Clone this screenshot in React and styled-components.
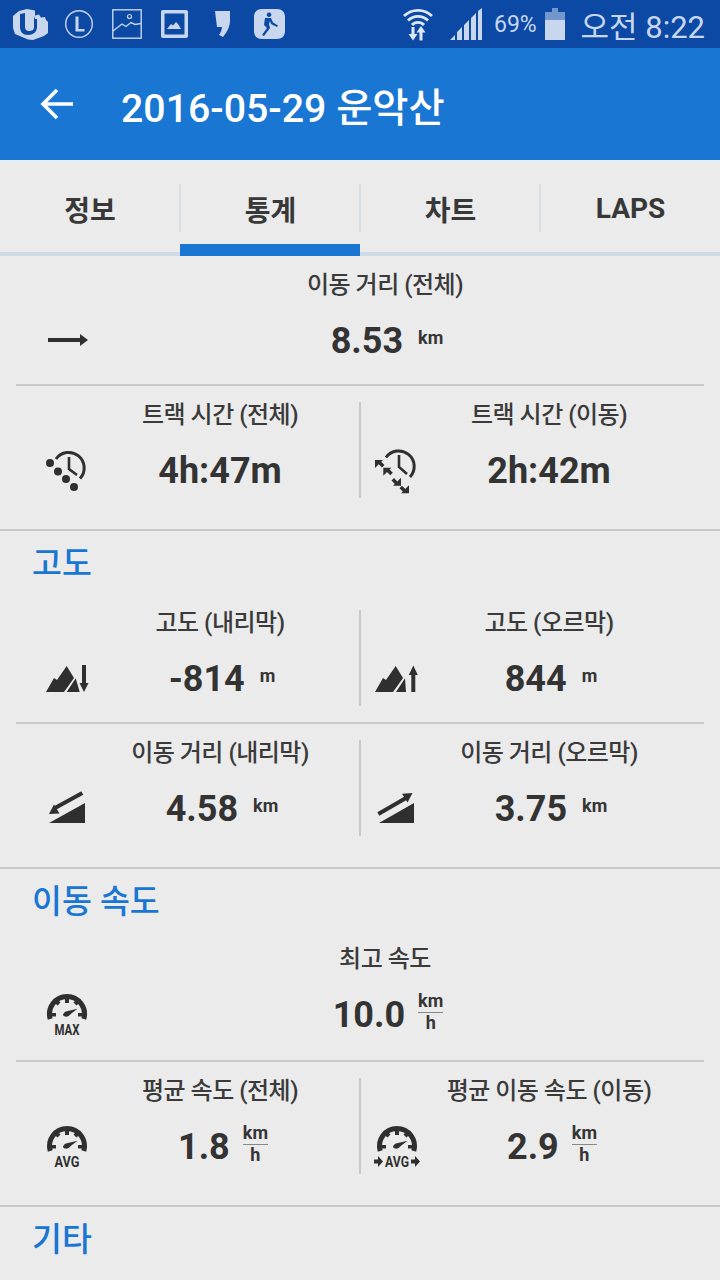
import React from 'react';
import styled, { createGlobalStyle } from 'styled-components';

const Global = createGlobalStyle`
  html, body { margin: 0; padding: 0; background: #ebebeb; }
  body { font-family: Roboto, "Noto Sans CJK KR", sans-serif; }
`;

const Screen = styled.div`
  width: 720px;
  height: 1280px;
  overflow: hidden;
  background: #ebebeb;
  color: #353535;
`;

// STATUS BAR
const StatusBar = styled.div`
  height: 48px;
  background: #0c49a5;
  color: #c8d6ee;
  display: flex;
  align-items: center;
  padding: 0 15px 0 13px;
`;
const StatusIcon = styled.svg`
  flex: none;
  display: block;
  margin-left: ${({ $left }) => $left || 0}px;
  fill: currentColor;
`;
const Battery = styled.span`
  font-size: 23px;
  margin-left: 12px;
  width: 43px;
`;
const Clock = styled.span`
  margin-left: auto;
  font-size: 31px;
  white-space: nowrap;
`;

// APP BAR
const AppBar = styled.div`
  height: 112px;
  background: #1976d2;
  color: #fff;
  display: flex;
  align-items: center;
  padding-left: 40px;
  gap: 47px;
`;
const Title = styled.h1`
  margin: 0;
  font-size: 39.3px;
  font-weight: 500;
  white-space: nowrap;
`;

// TABS
const TabBar = styled.div`
  height: 96px;
  box-sizing: border-box;
  border-top: 2px solid #e2eef8;
  border-bottom: 4px solid #cfdce6;
  display: grid;
  grid-template-columns: repeat(4, 1fr);
  padding-top: 22px;
`;
const Tab = styled.div`
  position: relative;
  height: 48px;
  box-sizing: border-box;
  padding-top: 1px;
  margin-left: ${({ $first }) => ($first ? 0 : -1)}px;
  display: flex;
  align-items: center;
  justify-content: center;
  font-size: 28px;
  font-weight: 700;
  color: #383838;
  border-left: ${({ $first }) => ($first ? 'none' : '2px solid #d6dee6')};

  &::after {
    content: '';
    display: ${({ $active }) => ($active ? 'block' : 'none')};
    position: absolute;
    left: -1px;
    right: 0;
    top: 60px;
    height: 12px;
    background: #1976d2;
  }
`;

// STATS
const Section = styled.section`
  padding-bottom: ${({ $last }) => ($last ? 0 : 15)}px;
  border-bottom: ${({ $last }) => ($last ? 'none' : '2px solid #c8c8c8')};
`;
const Heading = styled.h2`
  margin: 0;
  height: 63px;
  box-sizing: border-box;
  padding: 0 0 5px 32px;
  display: flex;
  align-items: center;
  font-size: 32.5px;
  font-weight: 500;
  color: #1976d2;
`;
const Row = styled.div`
  margin: 0 16px;
  padding: 16px 0;
  display: flex;
  & + & { border-top: 2px solid #c8c8c8; }
`;
const Cell = styled.div`
  flex: ${({ $full }) => ($full ? '1' : '0 0 auto')};
  width: ${({ $full, $width }) => ($full ? 'auto' : `${$width}px`)};
  height: 96px;
  box-sizing: border-box;
  display: flex;
  align-items: flex-start;
  padding: 0 ${({ $padRight }) => $padRight}px 0 ${({ $padLeft }) => $padLeft}px;
  & + & { border-left: 2px solid #c8c8c8; }
`;
const IconSlot = styled.div`
  flex: none;
  width: 44px;
  height: 44px;
  margin-top: ${({ $top }) => 46 + ($top || 0)}px;
  color: #2f2f2f;
`;
const CellBody = styled.div`
  flex: 1;
  min-width: 0;
  margin-top: ${({ $shift }) => 1 + ($shift || 0)}px;
  display: flex;
  flex-direction: column;
  align-items: center;
`;
const Label = styled.div`
  height: 24px;
  line-height: 24px;
  font-size: 24px;
  font-weight: 500;
  letter-spacing: -0.5px;
  white-space: nowrap;
  color: #3a3a3a;
`;
const ValueRow = styled.div`
  margin-top: 20px;
  height: 48px;
  padding-left: ${({ $offset }) => $offset}px;
  display: flex;
  align-items: center;
  gap: ${({ $gap }) => $gap}px;
`;
const Value = styled.span`
  font-size: 36px;
  font-weight: 700;
  color: #333;
  white-space: nowrap;
`;
const Unit = styled.span`
  font-size: 18px;
  font-weight: 700;
  margin-bottom: 7px;
`;
const Fraction = styled.span`
  display: inline-flex;
  flex-direction: column;
  align-items: center;
  font-size: 18px;
  font-weight: 700;
  line-height: 20px;
  margin-bottom: 7px;
  & > span:first-child {
    border-bottom: 1.5px solid #888;
    padding: 0 0 1px;
  }
`;
const GaugeText = styled.text`
  font-family: Roboto, sans-serif;
  font-weight: 700;
  font-size: 15px;
  fill: currentColor;
  text-anchor: middle;
`;

// ICONS
const Svg = ({ children }) => (
  <svg width="44" height="44" viewBox="0 0 44 44" fill="currentColor" style={{ display: 'block', overflow: 'visible' }}>
    {children}
  </svg>
);

const LongArrow = () => (
  <Svg>
    <rect x="3" y="20" width="33" height="4" />
    <path d="M35 16l8 6-8 6z" />
  </Svg>
);

const DotsClock = () => (
  <Svg>
    <path d="M11 11A15.500 15.500 0 1 1 35 30.500" fill="none" stroke="currentColor" strokeWidth="3" />
    <path d="M24 9v12l8 6" fill="none" stroke="currentColor" strokeWidth="2.600" />
    <circle cx="5" cy="15" r="4" />
    <circle cx="13" cy="23.500" r="4" />
    <circle cx="21" cy="31" r="4" />
    <circle cx="29" cy="39" r="4" />
  </Svg>
);

const TinyArrow = ({ x, y, flip }) => (
  <g transform={`translate(${x} ${y}) rotate(${flip ? 180 : 0})`}>
    <path d="M-5-5h8l-1.800 1.800 3.300 3.300-2.500 2.500-3.300-3.300L-3 1l-2 2z" />
  </g>
);

const ArrowsClock = () => (
  <Svg>
    <path d="M11 9.500A15.500 15.500 0 1 1 35 29" fill="none" stroke="currentColor" strokeWidth="3" />
    <path d="M24 7v12l8 7" fill="none" stroke="currentColor" strokeWidth="2.600" />
    <TinyArrow x={5} y={17} />
    <TinyArrow x={13.300} y={24.700} />
    <TinyArrow x={21} y={32.700} flip />
    <TinyArrow x={29} y={40.300} flip />
  </Svg>
);

const MountainDown = () => (
  <Svg>
    <path d="M1 36L9 22l3 2 9.700-14L29 22 19 36z" />
    <path d="M21.700 36l9-13.700 4 13.700z" />
    <path d="M37 9h4v18h2.500L39 36l-4.500-9H37z" />
  </Svg>
);

const MountainUp = () => (
  <Svg>
    <path d="M0 36L8 22l3 2 9.700-14L28 22 18 36z" />
    <path d="M21 36l9-13.700 1 13.700z" />
    <path d="M36.300 36V19H33.800l4.500-9.500L42.800 19h-2.500v17z" />
  </Svg>
);

const SlopeDown = () => (
  <Svg>
    <path d="M4 37l36-20v20z" />
    <path d="M37.300 7L10 22" fill="none" stroke="currentColor" strokeWidth="4" />
    <path d="M4 28l5-9.500 5.500 9z" />
  </Svg>
);

const SlopeUp = () => (
  <Svg>
    <path d="M4 37l35-20v20z" />
    <path d="M3.300 28L31 12" fill="none" stroke="currentColor" strokeWidth="4" />
    <path d="M37.500 7l-5 9.500-5.500-8.800z" />
  </Svg>
);

const GaugeArc = () => (
  <>
    <path d="M5.200 27A17.500 17.500 0 1 1 38.800 27" fill="none" stroke="currentColor" strokeWidth="5" />
    <path d="M20 6h4v5h-4zM9 10l3-3 3.500 3.600-3 3zM35 10l-3-3-3.500 3.600 3 3zM6 21h5v3.500H6zM33 21h5v3.500h-5z" />
    <path d="M18 22.500c1-2.500 3-3.300 6-3.700l8.500-2-6.500 5c-2 2.400-4 3.200-6 2.700-1-.3-2.200-1.300-2-2z" />
  </>
);

const Gauge = ({ text }) => (
  <Svg>
    <GaugeArc />
    <GaugeText x="22" y="43" textLength="25" lengthAdjust="spacingAndGlyphs">{text}</GaugeText>
  </Svg>
);

const GaugeArrows = () => (
  <Svg>
    <GaugeArc />
    <GaugeText x="22" y="43" textLength="24" lengthAdjust="spacingAndGlyphs">AVG</GaugeText>
    <path d="M-1 35.500h4V32l5 5.500-5 5.500v-3.500h-4z" />
    <path d="M36 35.500h4V32l5 5.500-5 5.500v-3.500h-4z" />
  </Svg>
);

// one stat tile, the left and right cells have different insets in the app
const INSETS = {
  full: { $padLeft: 29, $padRight: 23 },
  left: { $padLeft: 29, $padRight: 8, $width: 343 },
  right: { $padLeft: 14, $padRight: 25, $width: 345 },
};

const Stat = ({ side, icon, label, value, unit, fraction, iconTop, shift }) => (
  <Cell $full={side === 'full'} {...INSETS[side]}>
    <IconSlot $top={iconTop}>{icon}</IconSlot>
    <CellBody $shift={shift}>
      <Label>{label}</Label>
      <ValueRow $offset={fraction ? 6 : unit ? 4 : 0} $gap={fraction ? 13 : 15}>
        <Value>{value}</Value>
        {unit && <Unit>{unit}</Unit>}
        {fraction && (
          <Fraction>
            <span>km</span>
            <span>h</span>
          </Fraction>
        )}
      </ValueRow>
    </CellBody>
  </Cell>
);

const App = () => (
  <Screen>
    <Global />
    <StatusBar>
      <StatusIcon width="36" height="32" viewBox="0 0 36 32">
        <path fillRule="evenodd" d="M14 1l8 1.500v5l4-1 2 3 4-.500 1 3 2 2v11l-4 3-11 4-5-.500L2 26 0 20V8l6-5zM7 6v13c0 5 3 8 8 8s9-3 9-8v-8h-2l-1-3v11c0 3-2 4-5 4s-4-2-4-4V5z" />
      </StatusIcon>
      <StatusIcon $left={16} width="28" height="30" viewBox="0 0 28 30">
        <circle cx="14" cy="15" r="13.300" fill="none" stroke="currentColor" strokeWidth="1.400" />
        <path d="M10.500 7.500h3v12.500h6v2.500h-9z" />
      </StatusIcon>
      <StatusIcon $left={19} width="30" height="30" viewBox="0 0 30 30">
        <rect x="0.800" y="0.800" width="28.400" height="28.400" fill="none" stroke="currentColor" strokeWidth="1.400" />
        <circle cx="17.500" cy="7.500" r="2" fill="none" stroke="currentColor" strokeWidth="1.200" />
        <path d="M1 22l9-7 4 2.500 5-4 4 2 6-1" fill="none" stroke="currentColor" strokeWidth="1.400" />
      </StatusIcon>
      <StatusIcon $left={19} width="27" height="28" viewBox="0 0 27 28">
        <path fillRule="evenodd" d="M2 0h23a2 2 0 0 1 2 2v24a2 2 0 0 1-2 2H2a2 2 0 0 1-2-2V2a2 2 0 0 1 2-2zm1.500 3.500v21h20v-21zM6 19l4-5 2 1.500 3-3.500 2 2 3 5z" />
      </StatusIcon>
      <StatusIcon $left={26} width="16" height="26" viewBox="0 0 16 26">
        <path d="M1 0h15v9c0 7-3 12-7 17l-4-2c2-3 3-6 3-8H3z" />
      </StatusIcon>
      <StatusIcon $left={24} width="31" height="30" viewBox="0 0 31 30">
        <path fillRule="evenodd" d="M8 0h15c5 0 8 3 8 8v14c0 5-3 8-8 8H8c-5 0-8-3-8-8V8c0-5 3-8 8-8zm7 3.500a2.300 2.300 0 1 0 .1 0zM11 9l-1 7 3 3-5 7 2 1 6-8-1-4 1-3 1 3 6 3 1-1.500-5-3-2-4.500z" />
      </StatusIcon>
      <StatusIcon $left={117} width="32" height="34" viewBox="0 0 32 34" style={{ color: '#dfe7f5' }}>
        <path d="M2 9a20 20 0 0 1 28 0M6 13.500a14 14 0 0 1 20 0M10 18a8 8 0 0 1 12 0" fill="none" stroke="currentColor" strokeWidth="2.800" />
        <path d="M9.500 20h3v7h3l-4.500 6.500L6.500 27h3zM20.500 33.500h-3v-8h-3l4.500-6.500 4.500 6.500h-3z" />
      </StatusIcon>
      <StatusIcon $left={16} width="32" height="32" viewBox="0 0 32 32">
        <path d="M0 32l5-5v5zM7 32v-8l5-5v13zM14 32V17l5-5v20zM21 32V10l5-5v27zM28 32V3l4-3v32z" />
      </StatusIcon>
      <Battery>69%</Battery>
      <StatusIcon $left={8} width="20" height="32" viewBox="0 0 20 32">
        <path d="M7 0h6v4h7v8H0V4h7z" opacity="0.55" />
        <path d="M0 12h20v20H0z" />
      </StatusIcon>
      <Clock>오전 8:22</Clock>
    </StatusBar>

    <AppBar>
      <svg width="34" height="34" viewBox="0 0 34 34" fill="none" stroke="#fff" strokeWidth="3.600" style={{ flex: 'none' }}>
        <path d="M33 17H3M17 3L3 17l14 14" />
      </svg>
      <Title>2016-05-29 운악산</Title>
    </AppBar>

    <TabBar>
      <Tab $first>정보</Tab>
      <Tab $active>통계</Tab>
      <Tab>차트</Tab>
      <Tab>LAPS</Tab>
    </TabBar>

    <Section>
      <Row>
        <Stat side="full" icon={<LongArrow />} label="이동 거리 (전체)" value="8.53" unit="km" />
      </Row>
      <Row>
        <Stat side="left" icon={<DotsClock />} label="트랙 시간 (전체)" value="4h:47m" />
        <Stat side="right" icon={<ArrowsClock />} label="트랙 시간 (이동)" value="2h:42m" />
      </Row>
    </Section>

    <Section>
      <Heading>고도</Heading>
      <Row>
        <Stat side="left" icon={<MountainDown />} label="고도 (내리막)" value="-814" unit="m" />
        <Stat side="right" icon={<MountainUp />} label="고도 (오르막)" value="844" unit="m" />
      </Row>
      <Row>
        <Stat side="left" icon={<SlopeDown />} label="이동 거리 (내리막)" value="4.58" unit="km" />
        <Stat side="right" icon={<SlopeUp />} label="이동 거리 (오르막)" value="3.75" unit="km" />
      </Row>
    </Section>

    <Section>
      <Heading>이동 속도</Heading>
      <Row>
        <Stat side="full" icon={<Gauge text="MAX" />} label="최고 속도" value="10.0" fraction iconTop={-2} shift={-2} />
      </Row>
      <Row>
        <Stat side="left" icon={<Gauge text="AVG" />} label="평균 속도 (전체)" value="1.8" fraction />
        <Stat side="right" icon={<GaugeArrows />} label="평균 이동 속도 (이동)" value="2.9" fraction />
      </Row>
    </Section>

    <Section $last>
      <Heading>기타</Heading>
    </Section>
  </Screen>
);

export default App;
